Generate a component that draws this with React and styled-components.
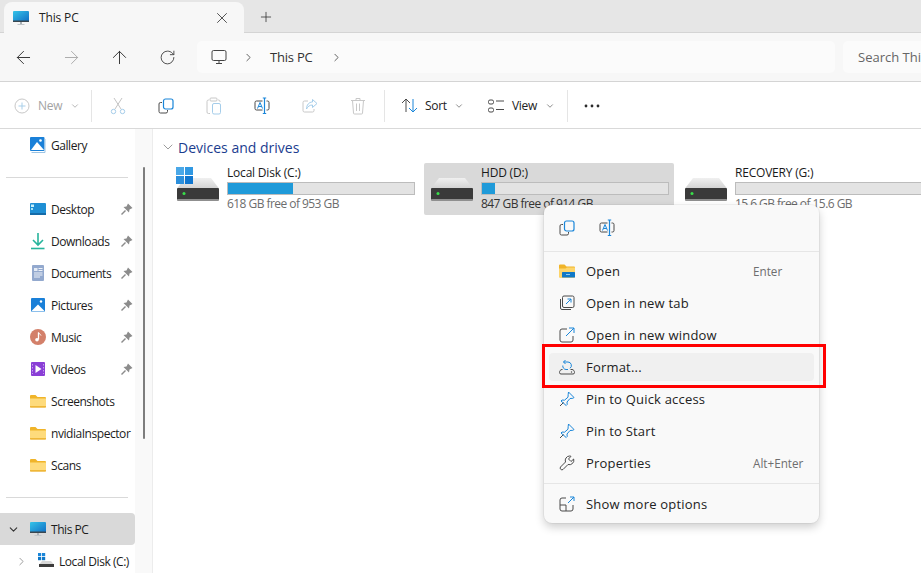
import React from "react"
import styled, { createGlobalStyle } from "styled-components"
import { ArrowLeft, ArrowRight, ArrowUp, RotateCw, ChevronRight, ChevronDown, X, Plus } from "lucide-react"

const BLUE = "#1a86d9"
const DARK = "#4a4a4a"

const GlobalStyle = createGlobalStyle`
  html, body { margin: 0; padding: 0; background: #fff; }
  body { font-family: "Open Sans", "Noto Sans", sans-serif; color: #1a1a1a; }
`

const Icon = ({ size = 16, w, h, children }) => (
  <svg width={w || size} height={h || size} viewBox={`0 0 ${w || size} ${h || size}`} fill="none">
    {children}
  </svg>
)

const PcIcon = () => (
  <Icon size={16}>
    <defs>
      <linearGradient id="pcg" x1="0" y1="0" x2="1" y2="1">
        <stop offset="0" stopColor="#35c4e8" />
        <stop offset="1" stopColor="#0f6cc4" />
      </linearGradient>
    </defs>
    <rect x="0" y="1" width="16" height="11" rx="1" fill="url(#pcg)" />
    <rect x="0" y="10.5" width="16" height="1.5" fill="#3a4750" />
    <rect x="7" y="12" width="2" height="2" fill="#a8b0b5" />
    <rect x="4.5" y="14" width="7" height="1" fill="#c0c5c9" />
  </Icon>
)

const PcOutline = () => (
  <Icon size={16}>
    <rect x="1" y="1.5" width="14" height="10" rx="1.5" stroke="#444" />
    <path d="M8 11.5v2.5M5 14.5h6" stroke="#444" />
  </Icon>
)

const NewIcon = () => (
  <Icon size={16}>
    <circle cx="8" cy="8" r="7" stroke="#c8c8c8" />
    <path d="M8 4.5v7M4.5 8h7" stroke="#a9cfe9" />
  </Icon>
)

const CutIcon = () => (
  <Icon size={16} h={18}>
    <path d="M4 1l7 11M12 1L5 12" stroke="#c4c4c4" />
    <circle cx="3.5" cy="14.5" r="2.2" stroke="#a5cdea" />
    <circle cx="12.5" cy="14.5" r="2.2" stroke="#a5cdea" />
  </Icon>
)

const CopyIcon = () => (
  <Icon size={16}>
    <path d="M4 4.5H2.5A1.5 1.5 0 0 0 1 6v7.5A1.5 1.5 0 0 0 2.5 15H8a1.5 1.5 0 0 0 1.5-1.5V12" stroke={DARK} />
    <rect x="5.5" y="1" width="9.5" height="10" rx="2" stroke={BLUE} strokeWidth="1.2" />
  </Icon>
)

const PasteIcon = () => (
  <Icon size={16} h={18}>
    <path d="M3 3H2.5A1.5 1.5 0 0 0 1 4.500V15a1.5 1.5 0 0 0 1.500 1.500H4M12 3h.5A1.500 1.500 0 0 1 14 4.500V5" stroke="#c8c8c8" />
    <rect x="4" y="1" width="7" height="3" rx="1" stroke="#c8c8c8" />
    <rect x="6.500" y="6.500" width="8" height="10.500" rx="1.500" stroke="#a5cdea" />
  </Icon>
)

const RenameIcon = () => (
  <Icon size={16} h={18}>
    <path d="M8.500 4H2.500A1.500 1.500 0 0 0 1 5.500v6A1.500 1.500 0 0 0 2.500 13h6M12.500 4h1A1.500 1.500 0 0 1 15 5.500v6A1.500 1.500 0 0 1 13.500 13h-1" stroke={DARK} />
    <path d="M10.500 1.500v15M8.800 1h3.400M8.800 16.500h3.400" stroke={BLUE} strokeWidth="1.200" />
    <path d="M3.500 11.500L6 5.500l2.500 6M4.400 9.500h3.200" stroke={BLUE} />
  </Icon>
)

const ShareIcon = () => (
  <Icon size={16}>
    <path d="M6 3H2.500A1.500 1.500 0 0 0 1 4.500v8A1.500 1.500 0 0 0 2.500 14h8a1.500 1.500 0 0 0 1.500-1.500V11" stroke="#c8c8c8" />
    <path d="M10.500 1.500L15 5.500l-4.500 4V7C7.500 7 6 8.500 4.500 11 4.500 7 7 4 10.500 4z" stroke="#a5cdea" />
  </Icon>
)

const TrashIcon = () => (
  <Icon size={16} h={18}>
    <path d="M1 3.500h14M6 3.500V1.500h4v2M2.500 3.500l1 12.500a1 1 0 0 0 1 1h7a1 1 0 0 0 1-1l1-12.500M6.500 6.500v7.500M9.500 6.500v7.500" stroke="#c8c8c8" />
  </Icon>
)

const SortIcon = () => (
  <Icon size={17}>
    <path d="M5 15V2M1 6l4-4 4 4" stroke={DARK} />
    <path d="M12 2v13M8 11l4 4 4-4" stroke={BLUE} />
  </Icon>
)

const ViewIcon = () => (
  <Icon size={16} h={14}>
    <rect x="0.500" y="1" width="5" height="4" rx="1.500" stroke={DARK} />
    <rect x="0.500" y="9" width="5" height="4" rx="1.500" stroke={DARK} />
    <path d="M8 2h8M8 10.500h8" stroke={DARK} />
  </Icon>
)

const DotsIcon = () => (
  <Icon size={16} h={4}>
    <circle cx="2" cy="2" r="1.400" fill="#2b2b2b" />
    <circle cx="8" cy="2" r="1.400" fill="#2b2b2b" />
    <circle cx="14" cy="2" r="1.400" fill="#2b2b2b" />
  </Icon>
)

const GalleryIcon = () => (
  <Icon size={16} h={17}>
    <rect x="0" y="0" width="14.500" height="14" rx="1" fill="#1a80d8" />
    <path d="M1 13l6-8 7 8z" fill="#fff" />
    <circle cx="10.500" cy="3.500" r="1.300" fill="#fff" />
    <path d="M1.500 15.500h13.500V2" stroke="#9cc4e4" />
  </Icon>
)

const DesktopIcon = () => (
  <Icon size={16}>
    <rect x="0" y="2" width="16" height="12" rx="1" fill="#1f8fd4" />
    <rect x="1" y="3.500" width="3" height="2.500" fill="#c8f0fa" />
    <rect x="1" y="7" width="2" height="2" fill="#a5e4f5" />
    <rect x="0" y="12" width="16" height="2" fill="#156ba8" />
  </Icon>
)

const DownloadIcon = () => (
  <Icon size={16} h={17}>
    <path d="M8 0v11M3 7l5 5 5-5" stroke="#27b49c" strokeWidth="1.600" />
    <path d="M1 15.500h13.500" stroke="#27b49c" strokeWidth="1.600" />
  </Icon>
)

const DocumentsIcon = () => (
  <Icon size={16}>
    <rect x="2" y="0" width="12" height="16" rx="1" fill="#93a9ce" />
    <rect x="4" y="3" width="3.500" height="3" fill="#e6ecf5" />
    <path d="M8.500 3.500h4M8.500 5.500h4M4 8h8.500M4 10h8.500M4 12h6" stroke="#eef2f8" />
  </Icon>
)

const PicturesIcon = () => (
  <Icon size={16}>
    <rect x="1" y="1" width="14" height="14" rx="1" fill="#1a80d8" />
    <path d="M1 14.500l7-7 7 7z" fill="#fff" />
    <circle cx="11" cy="4.500" r="1.200" fill="#fff" />
  </Icon>
)

const MusicIcon = () => (
  <Icon size={16}>
    <circle cx="8" cy="8" r="8" fill="#d3806a" />
    <path d="M8.500 3.500v7" stroke="#fff" strokeWidth="1.300" />
    <path d="M8.500 3.500c.5 1.500 2 1.500 2.500 3" stroke="#fff" />
    <circle cx="7" cy="10.800" r="1.800" fill="#fff" />
  </Icon>
)

const VideosIcon = () => (
  <Icon size={16}>
    <rect x="1" y="1" width="14" height="14" rx="1" fill="#8a3fd6" />
    <path d="M5.500 4l6 4-6 4z" fill="#fff" />
    <path d="M2.500 3v10M13.500 3v10" stroke="#c79cf0" strokeDasharray="1.500 1.500" />
  </Icon>
)

const FolderIcon = () => (
  <Icon size={16} h={14}>
    <path d="M0 2a1 1 0 0 1 1-1h4.500L7.500 3H15a1 1 0 0 1 1 1v8.500a1 1 0 0 1-1 1H1a1 1 0 0 1-1-1z" fill="#f0b429" />
    <path d="M0 4.500h16v8a.6.6 0 0 1-.6.6H.6a.6.6 0 0 1-.6-.6z" fill="#fedb7c" />
    <path d="M0 12.800h16" stroke="#e9a91c" />
  </Icon>
)

const OpenIcon = () => (
  <Icon size={16} h={14}>
    <path d="M0 1.500a1 1 0 0 1 1-1h4.500L7.500 2.500H15a1 1 0 0 1 1 1v9a1 1 0 0 1-1 1H1a1 1 0 0 1-1-1z" fill="#f0b429" />
    <path d="M0 4.500h6.500L8 3.500h8v9a1 1 0 0 1-1 1H1a1 1 0 0 1-1-1z" fill="#fdd56b" />
    <rect x="3" y="8" width="13" height="5.500" rx="0.500" fill="#0f78c8" />
    <path d="M7 10.500h4" stroke="#8ccaf0" />
  </Icon>
)

const NewTabIcon = () => (
  <Icon size={16}>
    <path d="M1.500 4v9a1.500 1.500 0 0 0 1.500 1.500h9" stroke={DARK} />
    <rect x="3.500" y="1" width="11.500" height="11.500" rx="1.500" stroke={DARK} />
    <path d="M7 9l5-5M8.500 4H12v3.500" stroke={BLUE} />
  </Icon>
)

const NewWindowIcon = () => (
  <Icon size={16}>
    <path d="M8 2H3A2 2 0 0 0 1 4v9a2 2 0 0 0 2 2h9a2 2 0 0 0 2-2V9" stroke={DARK} />
    <path d="M7 9l8-8M10 1h5v5" stroke={BLUE} />
  </Icon>
)

const FormatIcon = () => (
  <Icon size={16}>
    <path d="M3.500 10.500H3c-1.500 0-2.500 1.500-2.500 3a1.500 1.500 0 0 0 1.500 1.500h12a1.500 1.500 0 0 0 1.500-1.500c0-1.500-1-3-2.500-3h-1.500" stroke={DARK} />
    <circle cx="12.500" cy="13" r=".7" fill={DARK} />
    <path d="M4.500 3h4.500a3.500 3.500 0 0 1 2 6.300M6.500 1l-2 2 2 2M3.800 6.500a3.500 3.500 0 0 0 3.200 4h2" stroke={BLUE} />
  </Icon>
)

const PinMenuIcon = () => (
  <Icon size={16}>
    <path d="M9.500 1l5.500 5.500-1.200.8-2.800.2-3 3.500.2 2.500-1 1L2 10l1-1 2.500.2L9 6.200l.200-2.800z" stroke={BLUE} />
    <path d="M4.500 11.500L1 15" stroke={DARK} />
  </Icon>
)

const WrenchIcon = () => (
  <Icon size={16}>
    <path d="M10.500 1a4.500 4.500 0 0 1 1.500.3L9.500 4l2.500 2.500 2.700-2.500A4.500 4.500 0 0 1 9 9.500l-5 5a1.800 1.800 0 0 1-2.500-2.500l5-5A4.500 4.500 0 0 1 10.500 1z" stroke={DARK} />
  </Icon>
)

const MoreOptionsIcon = () => (
  <Icon size={16}>
    <path d="M7 2H3A2 2 0 0 0 1 4v9a2 2 0 0 0 2 2h9a2 2 0 0 0 2-2V9" stroke={DARK} />
    <path d="M1 9h6v6" stroke={DARK} />
    <path d="M9 7l6-6M11 1h4v4" stroke={BLUE} />
  </Icon>
)

const SidebarPin = () => (
  <Icon size={13}>
    <path d="M8 .5L12.500 5 9.500 6.500 9 9.500 3.500 4l3-.5z" fill="#8c8c8c" />
    <path d="M5.500 7.500L1.500 11.500" stroke="#8c8c8c" strokeWidth="1.400" />
  </Icon>
)

const WindowsLogo = () => (
  <Icon size={17}>
    <rect x="0" y="0" width="8" height="8" fill="#4aa8e8" />
    <rect x="9" y="0" width="8" height="8" fill="#3098e2" />
    <rect x="0" y="9" width="8" height="8" fill="#2b8fdc" />
    <rect x="9" y="9" width="8" height="8" fill="#1076cf" />
  </Icon>
)

const DriveArt = () => (
  <Icon w={42} h={23}>
    <defs>
      <linearGradient id="drvtop" x1="0" y1="0" x2="0" y2="1">
        <stop offset="0" stopColor="#f0f0f0" />
        <stop offset="1" stopColor="#d2d2d2" />
      </linearGradient>
    </defs>
    <path d="M8 0h26l8 10.500H0z" fill="url(#drvtop)" />
    <rect x="0" y="10" width="42" height="12" rx="1" fill="#3a3a3a" />
    <rect x="0" y="21" width="42" height="2" rx="1" fill="#8f8f8f" />
    <circle cx="7" cy="15.500" r="1.500" fill="#38e04a" />
  </Icon>
)

const SmallDisk = () => (
  <svg width="16" height="16" viewBox="0 0 16 16" fill="none">
    <rect x="0" y="0" width="3.200" height="3.200" fill="#1a86d9" />
    <rect x="4" y="0" width="3.200" height="3.200" fill="#1a86d9" />
    <rect x="0" y="4" width="3.200" height="3.200" fill="#0f78c8" />
    <rect x="4" y="4" width="3.200" height="3.200" fill="#0f78c8" />
    <path d="M4 8h9l3 3.500H1z" fill="#d8d8d8" />
    <rect x="1" y="11" width="15" height="3" fill="#3d3d3d" />
  </svg>
)

const quickAccess = [
  { label: "Desktop", icon: <DesktopIcon />, pinned: true },
  { label: "Downloads", icon: <DownloadIcon />, pinned: true },
  { label: "Documents", icon: <DocumentsIcon />, pinned: true },
  { label: "Pictures", icon: <PicturesIcon />, pinned: true },
  { label: "Music", icon: <MusicIcon />, pinned: true },
  { label: "Videos", icon: <VideosIcon />, pinned: true },
  { label: "Screenshots", icon: <FolderIcon /> },
  { label: "nvidiaInspector", icon: <FolderIcon /> },
  { label: "Scans", icon: <FolderIcon /> },
]

const drives = [
  { name: "Local Disk (C:)", free: "618 GB free of 953 GB", used: 35, system: true },
  { name: "HDD (D:)", free: "847 GB free of 914 GB", used: 7, selected: true },
  { name: "RECOVERY (G:)", free: "15.6 GB free of 15.6 GB", used: 0 },
]

const menuItems = [
  { label: "Open", icon: <OpenIcon />, shortcut: "Enter" },
  { label: "Open in new tab", icon: <NewTabIcon /> },
  { label: "Open in new window", icon: <NewWindowIcon /> },
  { label: "Format...", icon: <FormatIcon />, active: true },
  { label: "Pin to Quick access", icon: <PinMenuIcon /> },
  { label: "Pin to Start", icon: <PinMenuIcon /> },
  { label: "Properties", icon: <WrenchIcon />, shortcut: "Alt+Enter" },
]

export default function App() {
  return (
    <>
      <GlobalStyle />
      <Window>
        <TabStrip>
          <Tab>
            <PcIcon />
            <TabTitle>This PC</TabTitle>
            <X size={18} strokeWidth={1.1} color="#333" />
          </Tab>
          <NewTab>
            <Plus size={16} strokeWidth={1.2} color="#333" />
          </NewTab>
        </TabStrip>
        <NavBar>
          <NavButton><ArrowLeft size={21} strokeWidth={1.1} color="#333" /></NavButton>
          <NavButton><ArrowRight size={21} strokeWidth={1.1} color="#aaa" /></NavButton>
          <NavButton><ArrowUp size={21} strokeWidth={1.1} color="#333" /></NavButton>
          <NavButton><RotateCw size={17} strokeWidth={1.3} color="#444" /></NavButton>
          <AddressBox>
            <PcOutline />
            <ChevronRight size={13} strokeWidth={1.4} color="#333" />
            <Crumb>This PC</Crumb>
            <ChevronRight size={13} strokeWidth={1.4} color="#333" />
          </AddressBox>
          <SearchBox>Search This PC</SearchBox>
        </NavBar>
        <Toolbar>
          <NewButton>
            <NewIcon />
            <DimLabel>New</DimLabel>
            <ChevronDown size={10} color="#aaa" />
          </NewButton>
          <ToolSep />
          <ToolIcon><CutIcon /></ToolIcon>
          <ToolIcon><CopyIcon /></ToolIcon>
          <ToolIcon><PasteIcon /></ToolIcon>
          <ToolIcon><RenameIcon /></ToolIcon>
          <ToolIcon><ShareIcon /></ToolIcon>
          <ToolIcon><TrashIcon /></ToolIcon>
          <ToolSep />
          <SortButton>
            <SortIcon />
            <ToolLabel>Sort</ToolLabel>
            <ChevronDown size={10} color="#777" />
          </SortButton>
          <ViewButton>
            <ViewIcon />
            <ToolLabel>View</ToolLabel>
            <ChevronDown size={10} color="#777" />
          </ViewButton>
          <ToolSep />
          <MoreButton><DotsIcon /></MoreButton>
        </Toolbar>
        <Body>
          <Sidebar>
            <SideList>
              <SideRow><GalleryIcon /><SideLabel>Gallery</SideLabel></SideRow>
              <SideDivider />
              {quickAccess.map(item => (
                <SideRow key={item.label}>
                  {item.icon}
                  <SideLabel>{item.label}</SideLabel>
                  {item.pinned && <PinSlot><SidebarPin /></PinSlot>}
                </SideRow>
              ))}
              <SideDivider />
              <SideRow $selected>
                <Caret><ChevronDown size={13} strokeWidth={2} color="#333" /></Caret>
                <PcIcon />
                <SideLabel>This PC</SideLabel>
              </SideRow>
              <ChildRow>
                <Caret><ChevronRight size={13} strokeWidth={1.5} color="#888" /></Caret>
                <SmallDisk />
                <SideLabel>Local Disk (C:)</SideLabel>
              </ChildRow>
            </SideList>
            <ScrollTrack>
              <ScrollThumb />
            </ScrollTrack>
          </Sidebar>
          <Content>
            <GroupHeader>
              <ChevronDown size={16} strokeWidth={1.1} color="#777" />
              <GroupTitle>Devices and drives</GroupTitle>
            </GroupHeader>
            <DriveGrid>
              {drives.map(d => (
                <DriveTile key={d.name} $selected={d.selected}>
                  <DriveArtSlot>
                    {d.system && <LogoBadge><WindowsLogo /></LogoBadge>}
                    <DriveArt />
                  </DriveArtSlot>
                  <DriveInfo>
                    <DriveName>{d.name}</DriveName>
                    <UsageBar>
                      <UsageFill style={{ width: `${d.used}%` }} />
                    </UsageBar>
                    <DriveFree $selected={d.selected}>{d.free}</DriveFree>
                  </DriveInfo>
                </DriveTile>
              ))}
            </DriveGrid>
          </Content>
        </Body>
        <ContextMenu>
          <MenuTools>
            <MenuTool><CopyIcon /></MenuTool>
            <MenuTool><RenameIcon /></MenuTool>
          </MenuTools>
          <MenuList>
            {menuItems.map(item => (
              <MenuRow key={item.label} $active={item.active}>
                <MenuIconSlot>{item.icon}</MenuIconSlot>
                <MenuLabel>{item.label}</MenuLabel>
                {item.shortcut && <Shortcut>{item.shortcut}</Shortcut>}
              </MenuRow>
            ))}
          </MenuList>
          <MenuFooter>
            <MenuRow>
              <MenuIconSlot><MoreOptionsIcon /></MenuIconSlot>
              <MenuLabel>Show more options</MenuLabel>
            </MenuRow>
          </MenuFooter>
        </ContextMenu>
        <Highlight />
      </Window>
    </>
  )
}

const Window = styled.div`
  position: relative;
  width: 921px;
  height: 573px;
  overflow: hidden;
  display: flex;
  flex-direction: column;
  font-size: 12px;
  background: #fff;
`

const TabStrip = styled.div`
  display: flex;
  align-items: flex-end;
  height: 32px;
  padding-left: 4px;
  background: #e6e6e6;
  flex-shrink: 0;
`

const Tab = styled.div`
  display: flex;
  align-items: center;
  width: 240px;
  height: 31px;
  margin-bottom: -1px;
  padding: 0 13px 0 9px;
  box-sizing: border-box;
  background: #f7f7f7;
  border-radius: 8px 8px 0 0;
  position: relative;
  z-index: 1;
`

const TabTitle = styled.span`
  flex: 1;
  margin-left: 10px;
  font-size: 12px;
  letter-spacing: -0.15px;
  color: #222;
`

const NewTab = styled.div`
  display: flex;
  align-items: center;
  justify-content: center;
  width: 44px;
  height: 31px;
`

const NavBar = styled.div`
  display: flex;
  align-items: center;
  height: 50px;
  margin-left: -1px;
  background: #f7f7f7;
  border-top: 1px solid #d4d4d4;
  border-bottom: 1px solid #d4d4d4;
  box-sizing: border-box;
  flex-shrink: 0;
`

const NavButton = styled.div`
  display: flex;
  align-items: center;
  justify-content: center;
  width: 48px;
  flex-shrink: 0;
`

const AddressBox = styled.div`
  display: flex;
  align-items: center;
  width: 638px;
  height: 32px;
  margin-left: 6px;
  padding-left: 14px;
  box-sizing: border-box;
  background: #fbfbfb;
  border-radius: 5px;
  flex-shrink: 0;
  & > svg:nth-child(2) { margin: 0 15px 0 15px; }
  & > svg:nth-child(4) { margin-left: 17px; }
`

const Crumb = styled.span`
  font-size: 13px;
  letter-spacing: -0.2px;
  color: #333;
`

const SearchBox = styled.div`
  display: flex;
  align-items: center;
  width: 200px;
  height: 32px;
  margin-left: 8px;
  padding-left: 15px;
  box-sizing: border-box;
  background: #fbfbfb;
  border-radius: 5px;
  flex-shrink: 0;
  font-size: 13px;
  color: #666;
  white-space: nowrap;
`

const Toolbar = styled.div`
  display: flex;
  align-items: center;
  height: 47px;
  padding: 1px 0 0 6px;
  background: #fff;
  border-bottom: 1px solid #d9d9d9;
  box-sizing: border-box;
  flex-shrink: 0;
`

const ToolButton = styled.div`
  display: flex;
  align-items: center;
  height: 32px;
`

const NewButton = styled(ToolButton)`
  width: 83px;
  padding-left: 8px;
  box-sizing: border-box;
  gap: 8px;
`

const SortButton = styled(ToolButton)`
  width: 87px;
  margin-left: 14px;
  gap: 7px;
`

const ViewButton = styled(ToolButton)`
  width: 77px;
  gap: 8px;
`

const ToolIcon = styled(ToolButton)`
  justify-content: center;
  width: 48px;
`

const ToolSep = styled.div`
  width: 1px;
  height: 32px;
  margin: 0 2px;
  background: #e5e5e5;
`

const ToolLabel = styled.span`
  font-size: 12px;
  letter-spacing: -0.3px;
  color: #222;
`

const DimLabel = styled(ToolLabel)`
  color: #a3a3a3;
`

const MoreButton = styled(ToolButton)`
  justify-content: center;
  width: 44px;
`

const Body = styled.div`
  display: flex;
  flex: 1;
  min-height: 0;
`

const Sidebar = styled.div`
  display: flex;
  width: 153px;
  flex-shrink: 0;
  border-right: 1px solid #ececec;
  box-sizing: border-box;
`

const SideList = styled.div`
  width: 135px;
  flex-shrink: 0;
  overflow: hidden;
`

const SideRow = styled.div`
  display: flex;
  align-items: center;
  height: 32px;
  padding-left: ${p => (p.$selected ? "7px" : "30px")};
  box-sizing: border-box;
  border-radius: 0 4px 4px 0;
  background: ${p => (p.$selected ? "#d9d9d9" : "transparent")};
`

const ChildRow = styled(SideRow)`
  padding-left: 15px;
`

const Caret = styled.span`
  display: flex;
  width: 23px;
  flex-shrink: 0;
`

const SideLabel = styled.span`
  margin-left: 5px;
  flex: 1;
  font-size: 12px;
  letter-spacing: -0.45px;
  white-space: nowrap;
  color: #1c1c1c;
`

const PinSlot = styled.span`
  display: flex;
  margin-right: 2px;
`

const SideDivider = styled.div`
  height: 1px;
  margin: 16px 0 15px 6px;
  width: 122px;
  background: #d9d9d9;
`

const ScrollTrack = styled.div`
  flex: 1;
  background: #f9f9f9;
  padding: 38px 0 0 8px;
`

const ScrollThumb = styled.div`
  width: 2px;
  height: 272px;
  background: #7d7d7d;
  border-radius: 1px;
`

const Content = styled.div`
  flex: 1;
  min-width: 0;
  padding: 9px 0 0 17px;
`

const GroupHeader = styled.div`
  display: flex;
  align-items: center;
  height: 18px;
  margin-left: -10px;
  gap: 2px;
`

const GroupTitle = styled.span`
  font-size: 14px;
  letter-spacing: 0;
  color: #1b3d8f;
`

const DriveGrid = styled.div`
  display: grid;
  grid-template-columns: repeat(3, 250px);
  gap: 4px;
  margin-top: 7px;
`

const DriveTile = styled.div`
  display: flex;
  height: 52px;
  padding: 0 5px 0 7px;
  box-sizing: border-box;
  border-radius: 2px;
  background: ${p => (p.$selected ? "#d9d9d9" : "transparent")};
`

const DriveArtSlot = styled.div`
  position: relative;
  width: 50px;
  flex-shrink: 0;
  padding-top: 15px;
  box-sizing: border-box;
`

const LogoBadge = styled.div`
  position: absolute;
  left: -1px;
  top: 4px;
  z-index: 1;
`

const DriveInfo = styled.div`
  flex: 1;
  min-width: 0;
  display: flex;
  flex-direction: column;
`

const DriveName = styled.div`
  height: 19px;
  line-height: 19px;
  font-size: 12px;
  letter-spacing: -0.2px;
  color: #1a1a1a;
`

const UsageBar = styled.div`
  height: 13px;
  background: #e3e3e3;
  border: 1px solid #bcbcbc;
  box-sizing: border-box;
`

const UsageFill = styled.div`
  height: 100%;
  background: #1f9ad9;
`

const DriveFree = styled.div`
  margin-top: 0;
  font-size: 12px;
  letter-spacing: -0.55px;
  color: ${p => (p.$selected ? "#333" : "#6d6d6d")};
`

const ContextMenu = styled.div`
  position: absolute;
  left: 544px;
  top: 205px;
  width: 275px;
  height: 318px;
  display: flex;
  flex-direction: column;
  background: #f9f9f9;
  border-radius: 8px;
  box-shadow: 0 0 0 1px rgba(0, 0, 0, 0.04), 0 4px 10px rgba(0, 0, 0, 0.2);
  z-index: 2;
`

const MenuTools = styled.div`
  display: flex;
  align-items: center;
  height: 46px;
  padding-left: 15px;
  border-bottom: 1px solid #e6e6e6;
  flex-shrink: 0;
  gap: 24px;
`

const MenuTool = styled.div`
  display: flex;
  width: 16px;
`

const MenuList = styled.div`
  display: flex;
  flex-direction: column;
  padding: 3px 0 4px;
  border-bottom: 1px solid #e6e6e6;
`

const MenuRow = styled.div`
  display: flex;
  align-items: center;
  height: 28px;
  margin: 2px 5px;
  padding-left: 10px;
  border-radius: 4px;
  background: ${p => (p.$active ? "#f0f0f0" : "transparent")};
`

const MenuIconSlot = styled.span`
  display: flex;
  width: 27px;
  flex-shrink: 0;
`

const MenuLabel = styled.span`
  flex: 1;
  font-size: 13px;
  letter-spacing: 0.2px;
  color: #222;
`

const Shortcut = styled.span`
  width: 61px;
  font-size: 11.7px;
  color: #6e6e6e;
`

const MenuFooter = styled.div`
  padding-top: 4px;
`

const Highlight = styled.div`
  position: absolute;
  left: 542px;
  top: 344px;
  width: 284px;
  height: 44px;
  box-sizing: border-box;
  border: 3px solid #f00;
  z-index: 3;
`
